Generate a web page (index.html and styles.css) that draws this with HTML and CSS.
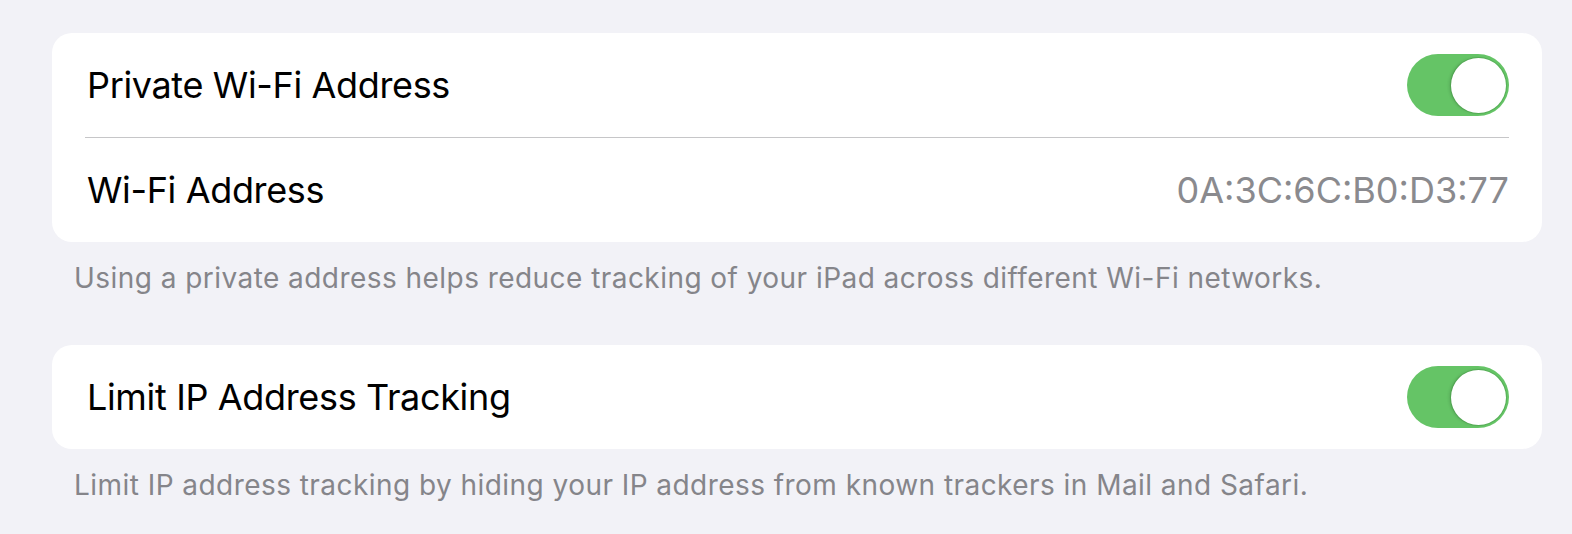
FILE: index.html
```html
<!DOCTYPE html>
<html lang="en">
<head>
    <meta charset="UTF-8">
    <title>Wi-Fi</title>
    <link rel="stylesheet" href="styles.css">
</head>
<body>
<div class="page">
    <div class="group">
        <div class="row">
            <span class="label">Private Wi-Fi Address</span>
            <span class="switch on"><span class="knob"></span></span>
        </div>
        <div class="sep"></div>
        <div class="row">
            <span class="label">Wi-Fi Address</span>
            <span class="value">0A:3C:6C:B0:D3:77</span>
        </div>
    </div>
    <p class="footer">Using a private address helps reduce tracking of your iPad across different Wi-Fi networks.</p>

    <div class="group">
        <div class="row">
            <span class="label">Limit IP Address Tracking</span>
            <span class="switch on"><span class="knob"></span></span>
        </div>
    </div>
    <p class="footer">Limit IP address tracking by hiding your IP address from known trackers in Mail and Safari.</p>
</div>
</body>
</html>
```

FILE: styles.css
```css
* {
    margin: 0;
    padding: 0;
    box-sizing: border-box;
}

body {
    background-color: #f2f2f7;
    font-family: Inter, "Noto Sans", sans-serif;
    color: #000;
}

.page {
    padding: 33px 30px 0 52px;
}

.group {
    background-color: #fff;
    border-radius: 20px;
    padding: 0 33px;
}

.row {
    height: 104px;
    display: flex;
    align-items: center;
    justify-content: space-between;
}

.label {
    font-size: 36px;
    line-height: 44px;
    letter-spacing: -0.35px;
    padding-left: 2px;
}

.value {
    font-size: 36px;
    line-height: 44px;
    color: #8a8a8e;
}

.sep {
    height: 1px;
    background-color: #c6c6c8;
}

.switch {
    width: 102px;
    height: 62px;
    border-radius: 31px;
    background-color: #65c466;
    display: flex;
    align-items: center;
    padding: 0 3px;
}

.switch.on {
    justify-content: flex-end;
}

.knob {
    width: 55px;
    height: 55px;
    border-radius: 50%;
    background-color: #fff;
    box-shadow: 0 0 0 1px rgba(60, 140, 60, 0.35), -2px 0 3px rgba(0, 0, 0, 0.12);
}

.footer {
    font-size: 28px;
    line-height: 34px;
    letter-spacing: 0.45px;
    color: #85858a;
    padding: 19px 0 50px 22px;
}
```
